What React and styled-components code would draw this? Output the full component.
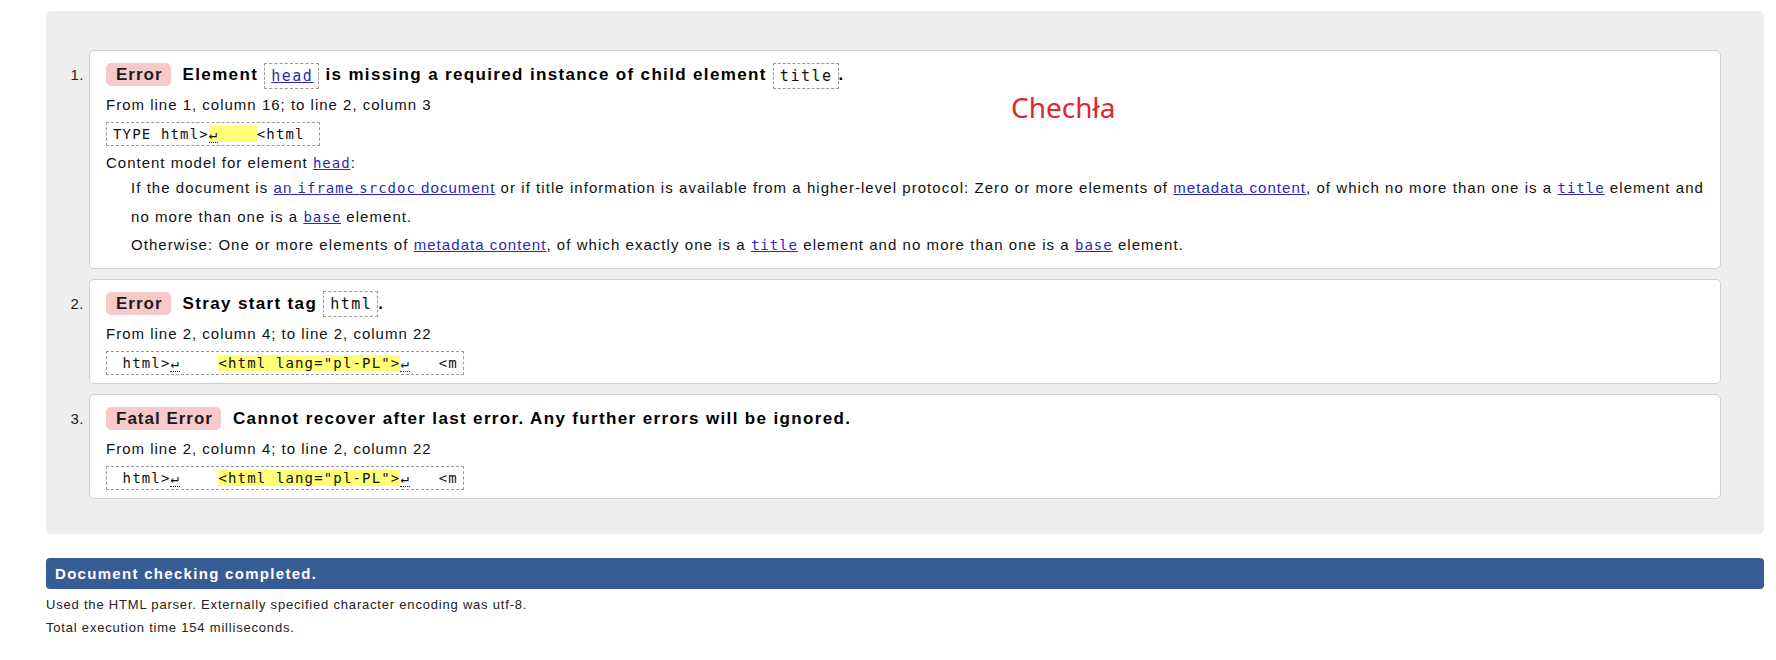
import React from "react";
import styled, { createGlobalStyle } from "styled-components";

const GlobalStyle = createGlobalStyle`
  html, body {
    margin: 0;
    padding: 0;
    background: #fff;
  }
  body {
    font-family: "Liberation Sans", Arial, sans-serif;
    color: #111;
  }
`;

const Page = styled.div`
  position: relative;
  padding: 11px 12px 0 46px;
`;

const Results = styled.ol`
  list-style: none;
  margin: 0;
  padding: 39px 43px 35px 0;
  background: #eeeeee;
  border-radius: 5px;
  display: flex;
  flex-direction: column;
  gap: 10px;
`;

const Item = styled.li`
  display: flex;
  align-items: flex-start;
`;

const Num = styled.span`
  flex: none;
  width: 43px;
  box-sizing: border-box;
  padding: 10px 5px 0 0;
  text-align: right;
  font-size: 15px;
  line-height: 30px;
  letter-spacing: 0.5px;
  color: #222;
`;

const Card = styled.div`
  flex: 1;
  min-width: 0;
  background: #fff;
  border: 1px solid #cfcfcf;
  border-radius: 5px;
  padding: 9px 8px 8px 16px;
`;

const Heading = styled.p`
  margin: 0 0 4px;
  font-size: 17px;
  font-weight: bold;
  letter-spacing: 1.35px;
  line-height: 30px;
  color: #000;
`;

const Badge = styled.span`
  display: inline-block;
  padding: 0 8px 0 10px;
  margin-right: 12px;
  line-height: 23px;
  letter-spacing: 1px;
  border-radius: 5px;
  background: #f8c9c9;
  color: #1b1b1b;
`;

const Tag = styled.code`
  display: inline-block;
  padding: 2px 5px 2px 6px;
  border: 1px dashed #9a9a9a;
  font-family: "DejaVu Sans Mono", monospace;
  font-size: 15px;
  font-weight: normal;
  letter-spacing: 1.5px;
  line-height: 20px;
  vertical-align: middle;
  color: #111;
`;

const Link = styled.a`
  color: #2a2ab8;
  text-decoration: underline;
`;

const Location = styled.p`
  margin: 0;
  font-size: 15px;
  letter-spacing: 1px;
  line-height: 22px;
  color: #111;
`;

const Extract = styled.p`
  width: fit-content;
  margin: 6px 0 0;
  padding: 0 5px 0 6px;
  border: 1px dashed #9a9a9a;
  font-family: "DejaVu Sans Mono", monospace;
  font-size: 14px;
  letter-spacing: 1.15px;
  line-height: 22px;
  white-space: pre;
  color: #111;
`;

const Mark = styled.mark`
  background: #ffff78;
  color: inherit;
`;

const LineBreak = styled.abbr`
  text-decoration: none;
  border-bottom: 1px dotted #222;
`;

const ModelTitle = styled.p`
  margin: 6px 0 0;
  font-size: 15px;
  letter-spacing: 1px;
  line-height: 21px;
  color: #111;
`;

const ModelText = styled.p`
  margin: 0 0 0 25px;
  font-size: 15px;
  letter-spacing: 1.05px;
  line-height: 27.5px;
  color: #111;
`;

const Code = styled.code`
  font-family: "DejaVu Sans Mono", monospace;
  font-size: 14px;
  letter-spacing: 1px;
`;

const Status = styled.h2`
  margin: 24px 0 0;
  padding: 0 9px;
  background: #375d94;
  color: #fff;
  border-radius: 4px;
  font-size: 15px;
  font-weight: bold;
  letter-spacing: 1.3px;
  line-height: 31px;
`;

const Details = styled.div`
  padding-top: 4px;
`;

const DetailLine = styled.p`
  margin: 0;
  font-size: 13px;
  letter-spacing: 0.8px;
  line-height: 23px;
  color: #222;
`;

const Annotation = styled.span`
  position: absolute;
  left: 1011px;
  top: 93px;
  font-family: "Noto Sans", sans-serif;
  font-size: 28px;
  line-height: 1;
  color: #e0262e;
`;

const Message = ({ n, type, children, location, extract, extra }) => (
  <Item>
    <Num>{n}.</Num>
    <Card>
      <Heading>
        <Badge>{type}</Badge>
        {children}
      </Heading>
      <Location>{location}</Location>
      <Extract>{extract}</Extract>
      {extra}
    </Card>
  </Item>
);

const HeadModel = () => (
  <>
    <ModelTitle>
      Content model for element <Link href="#head"><Code>head</Code></Link>:
    </ModelTitle>
    <ModelText>
      If the document is <Link href="#srcdoc">an <Code>iframe</Code> <Code>srcdoc</Code> document</Link> or if
      title information is available from a higher-level protocol: Zero or more elements of{" "}
      <Link href="#metadata">metadata content</Link>, of which no more than one is a{" "}
      <Link href="#title"><Code>title</Code></Link> element and no more than one is a{" "}
      <Link href="#base"><Code>base</Code></Link> element.
    </ModelText>
    <ModelText>
      Otherwise: One or more elements of <Link href="#metadata">metadata content</Link>, of which exactly
      one is a <Link href="#title"><Code>title</Code></Link> element and no more than one is a{" "}
      <Link href="#base"><Code>base</Code></Link> element.
    </ModelText>
  </>
);

const strayExtract = (
  <>
    {" html>"}
    <LineBreak title="line break">↵</LineBreak>
    {"    "}
    <Mark>{'<html lang="pl-PL">'}</Mark>
    <LineBreak title="line break">↵</LineBreak>
    {"   <m"}
  </>
);

const App = () => (
  <Page>
    <GlobalStyle />
    <Results>
      <Message
        n={1}
        type="Error"
        location="From line 1, column 16; to line 2, column 3"
        extract={
          <>
            {"TYPE html>"}
            <Mark>
              <LineBreak title="line break">↵</LineBreak>
              {"    "}
            </Mark>
            {"<html "}
          </>
        }
        extra={<HeadModel />}
      >
        Element <Tag><Link href="#head">head</Link></Tag> is missing a required instance of child element{" "}
        <Tag>title</Tag>.
      </Message>
      <Message
        n={2}
        type="Error"
        location="From line 2, column 4; to line 2, column 22"
        extract={strayExtract}
      >
        Stray start tag <Tag>html</Tag>.
      </Message>
      <Message
        n={3}
        type="Fatal Error"
        location="From line 2, column 4; to line 2, column 22"
        extract={strayExtract}
      >
        Cannot recover after last error. Any further errors will be ignored.
      </Message>
    </Results>
    <Status>Document checking completed.</Status>
    <Details>
      <DetailLine>Used the HTML parser. Externally specified character encoding was utf-8.</DetailLine>
      <DetailLine>Total execution time 154 milliseconds.</DetailLine>
    </Details>
    <Annotation>Chechła</Annotation>
  </Page>
);

export default App;
